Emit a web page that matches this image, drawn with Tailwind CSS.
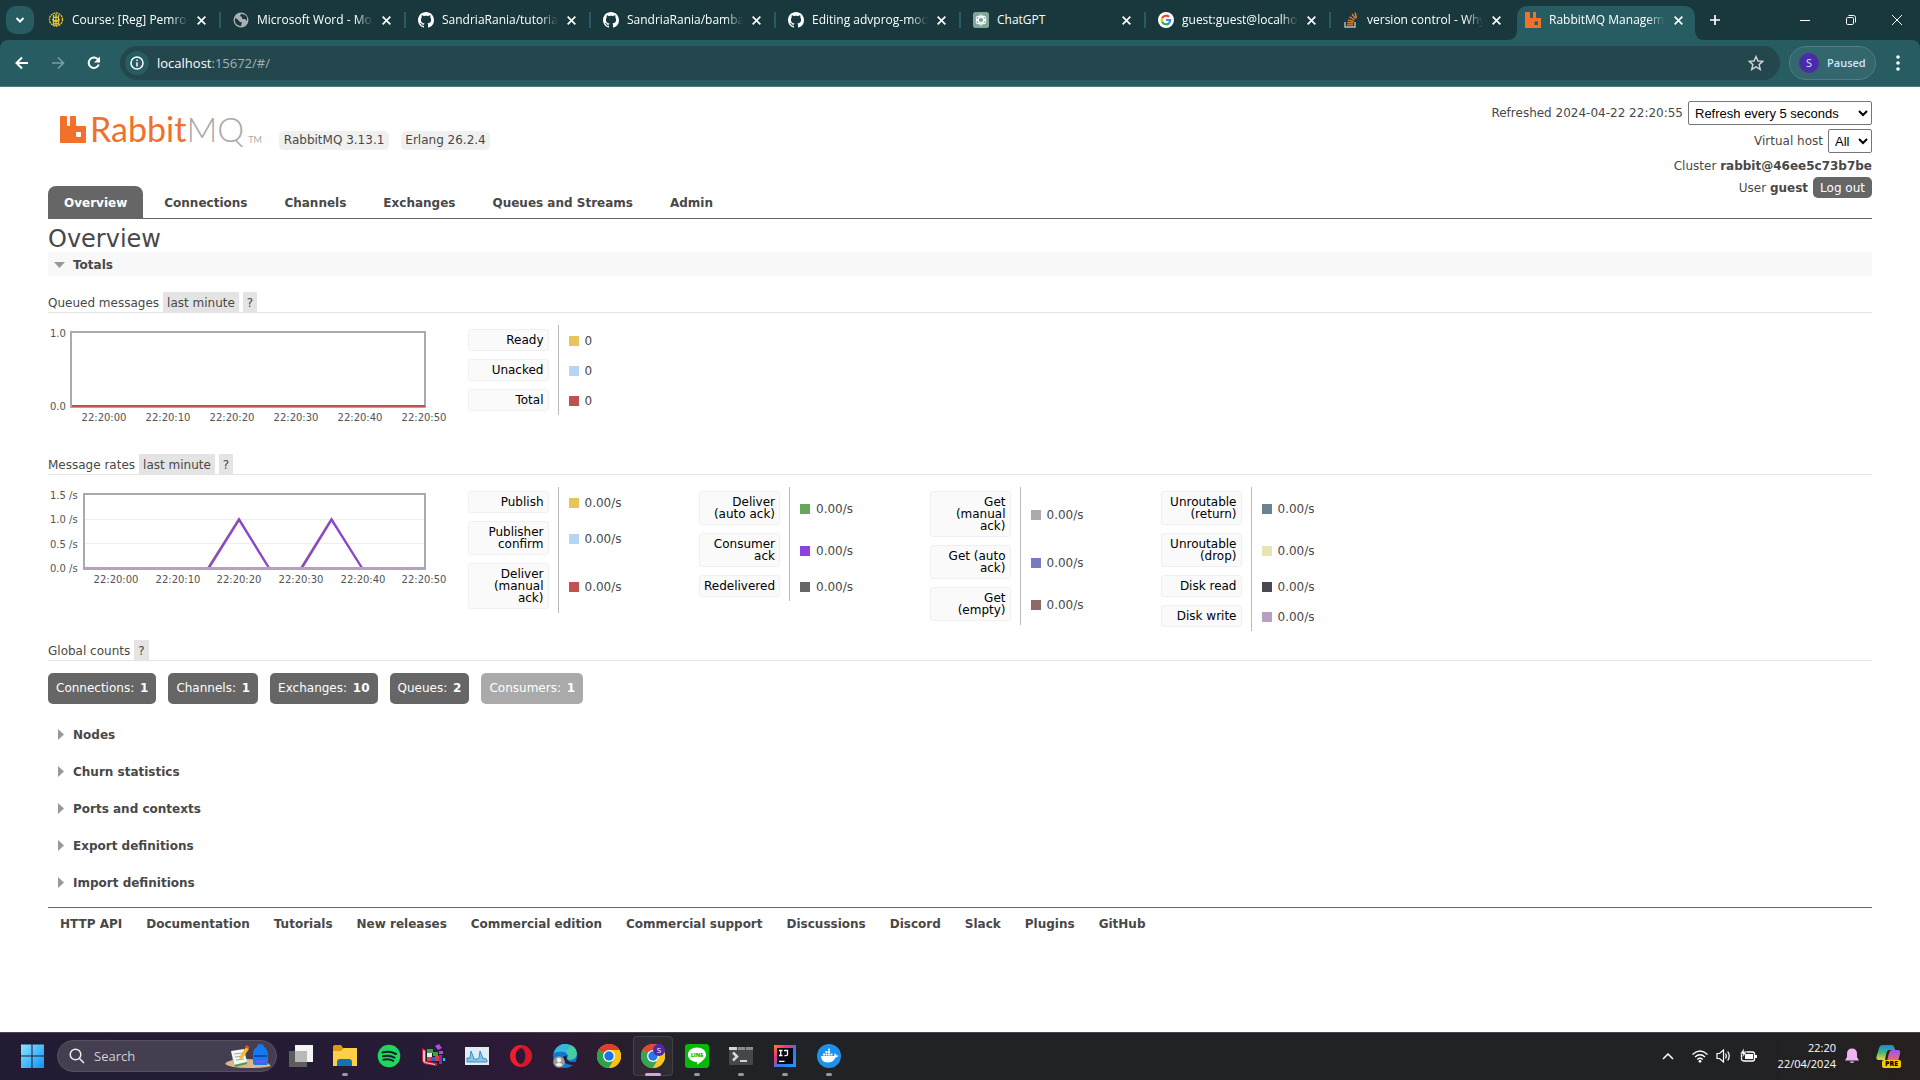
<!DOCTYPE html>
<html lang="en">
<head>
<meta charset="utf-8">
<title>RabbitMQ Management</title>
<script src="https://cdn.jsdelivr.net/npm/@tailwindcss/browser@4"></script>
</head>
<body class="min-h-screen flex flex-col bg-white text-[#484848] text-[12px] leading-4 font-['DejaVu_Sans',Verdana,sans-serif]">

<svg class="hidden">
  <defs>
    <symbol id="x" viewBox="0 0 10 10"><path d="M1.500 1.500l7 7M8.500 1.500l-7 7" stroke="#fff" stroke-width="1.500" fill="none"/></symbol>
    <symbol id="github" viewBox="0 0 16 16"><path fill="#fff" d="M8 0C3.580 0 0 3.580 0 8c0 3.540 2.290 6.530 5.470 7.590.4.070.55-.17.55-.38 0-.19-.01-.82-.01-1.490-2.010.37-2.530-.49-2.690-.94-.09-.23-.48-.94-.82-1.130-.28-.15-.68-.52-.01-.53.63-.01 1.080.58 1.230.82.72 1.210 1.870.87 2.330.66.07-.52.28-.87.51-1.070-1.780-.2-3.640-.89-3.640-3.950 0-.87.31-1.590.82-2.150-.08-.2-.36-1.020.08-2.120 0 0 .67-.21 2.200.82.64-.18 1.320-.27 2-.27s1.360.09 2 .27c1.530-1.040 2.200-.82 2.200-.82.44 1.100.16 1.920.08 2.120.51.56.82 1.270.82 2.150 0 3.070-1.870 3.750-3.650 3.950.29.25.54.73.54 1.480 0 1.070-.01 1.930-.01 2.200 0 .21.15.46.55.38A8 8 0 0 0 16 8c0-4.420-3.580-8-8-8z"/></symbol>
    <symbol id="rabbit" viewBox="0 0 26 27"><path fill="#f0702c" d="M1 0h5q1 0 1 1v8q0 1 1 1h1q1 0 1-1V1q0-1 1-1h4q1 0 1 1v8q0 1 1 1h8q1 0 1 1v15q0 1-1 1H1q-1 0-1-1V1q0-1 1-1z"/><rect x="16" y="16" width="5" height="5" rx="1" fill="#fff"/></symbol>
    <symbol id="chrome" viewBox="0 0 24 24"><circle cx="12" cy="12" r="12" fill="#fbc116"/><path fill="#e33b2e" d="M12 12 1.600 6A12 12 0 0 1 22.400 6z"/><path fill="#2ba24c" d="M1.600 6A12 12 0 0 0 12 24l5.200-9L12 12z"/><path fill="#fbc116" d="M12 6h10.400A12 12 0 0 1 12 24l5.200-9z"/><circle cx="12" cy="12" r="6" fill="#fff"/><circle cx="12" cy="12" r="4.700" fill="#1a73e8"/></symbol>
  </defs>
</svg>

<!-- Browser window: tab strip -->
<div class="flex h-10 bg-[#18383d] pl-[6px] text-white font-['Open_Sans',sans-serif] font-medium">
  <button aria-label="Search tabs" class="mt-[6px] size-7 shrink-0 rounded-[10px] bg-[#265c62] grid place-items-center"><svg class="size-[10px]" viewBox="0 0 10 10"><path d="M1.500 3l3.500 3.500L8.500 3" fill="none" stroke="#fff" stroke-width="2"/></svg></button>
  <div class="flex min-w-0 pl-[2px]">
    <div class="relative flex items-center gap-2 w-[185px] min-w-0 pl-3 pr-[14px]">
      <svg class="size-4 shrink-0" viewBox="0 0 16 16"><g fill="none" stroke="#ecc92f" stroke-width="1.300"><circle cx="8" cy="7.500" r="6.500" stroke-dasharray="2 .7"/><path d="M8 2v12M5 4.500q3 2 6 0M4 7.500q4 3 8 0M5 11q3 2 6 0M5.500 3v10M10.500 3v10"/></g></svg>
      <span class="flex-1 min-w-0 overflow-hidden whitespace-nowrap [mask-image:linear-gradient(to_right,#000_85%,transparent)]">Course: [Reg] Pemrog</span>
      <button aria-label="Close tab" class="shrink-0"><svg class="size-[11px]"><use href="#x"/></svg></button>
      <i class="absolute right-0 top-3 h-4 w-[2px] bg-[#265c62]"></i>
    </div>
    <div class="relative flex items-center gap-2 w-[185px] min-w-0 pl-3 pr-[14px]">
      <svg class="size-4 shrink-0" viewBox="0 0 16 16"><circle cx="8" cy="8" r="7.500" fill="#a9b0b4"/><path fill="#18383d" d="M2 6q3 1 4 3t3 1l-1 4q-4 0-6-4zM8 2l-1 2 2 1 0 2 3 0 2 2V5q-2-3-6-3z"/></svg>
      <span class="flex-1 min-w-0 overflow-hidden whitespace-nowrap [mask-image:linear-gradient(to_right,#000_85%,transparent)]">Microsoft Word - Mo</span>
      <button aria-label="Close tab" class="shrink-0"><svg class="size-[11px]"><use href="#x"/></svg></button>
      <i class="absolute right-0 top-3 h-4 w-[2px] bg-[#265c62]"></i>
    </div>
    <div class="relative flex items-center gap-2 w-[185px] min-w-0 pl-3 pr-[14px]">
      <svg class="size-4 shrink-0"><use href="#github"/></svg>
      <span class="flex-1 min-w-0 overflow-hidden whitespace-nowrap [mask-image:linear-gradient(to_right,#000_85%,transparent)]">SandriaRania/tutorial</span>
      <button aria-label="Close tab" class="shrink-0"><svg class="size-[11px]"><use href="#x"/></svg></button>
      <i class="absolute right-0 top-3 h-4 w-[2px] bg-[#265c62]"></i>
    </div>
    <div class="relative flex items-center gap-2 w-[185px] min-w-0 pl-3 pr-[14px]">
      <svg class="size-4 shrink-0"><use href="#github"/></svg>
      <span class="flex-1 min-w-0 overflow-hidden whitespace-nowrap [mask-image:linear-gradient(to_right,#000_85%,transparent)]">SandriaRania/bamba</span>
      <button aria-label="Close tab" class="shrink-0"><svg class="size-[11px]"><use href="#x"/></svg></button>
      <i class="absolute right-0 top-3 h-4 w-[2px] bg-[#265c62]"></i>
    </div>
    <div class="relative flex items-center gap-2 w-[185px] min-w-0 pl-3 pr-[14px]">
      <svg class="size-4 shrink-0"><use href="#github"/></svg>
      <span class="flex-1 min-w-0 overflow-hidden whitespace-nowrap [mask-image:linear-gradient(to_right,#000_85%,transparent)]">Editing advprog-mod</span>
      <button aria-label="Close tab" class="shrink-0"><svg class="size-[11px]"><use href="#x"/></svg></button>
      <i class="absolute right-0 top-3 h-4 w-[2px] bg-[#265c62]"></i>
    </div>
    <div class="relative flex items-center gap-2 w-[185px] min-w-0 pl-3 pr-[14px]">
      <svg class="size-4 shrink-0" viewBox="0 0 16 16"><rect width="16" height="16" rx="2.500" fill="#7fa798"/><g fill="none" stroke="#fff" stroke-width=".9"><ellipse cx="8" cy="8" rx="2.600" ry="5.300"/><ellipse cx="8" cy="8" rx="2.600" ry="5.300" transform="rotate(60 8 8)"/><ellipse cx="8" cy="8" rx="2.600" ry="5.300" transform="rotate(120 8 8)"/></g></svg>
      <span class="flex-1 min-w-0 overflow-hidden whitespace-nowrap">ChatGPT</span>
      <button aria-label="Close tab" class="shrink-0"><svg class="size-[11px]"><use href="#x"/></svg></button>
      <i class="absolute right-0 top-3 h-4 w-[2px] bg-[#265c62]"></i>
    </div>
    <div class="relative flex items-center gap-2 w-[185px] min-w-0 pl-3 pr-[14px]">
      <svg class="size-4 shrink-0" viewBox="0 0 16 16"><circle cx="8" cy="8" r="8" fill="#fff"/><g fill="none" stroke-width="2.200"><path stroke="#ea4335" d="M4.200 6A4.300 4.300 0 0 1 11 4.900"/><path stroke="#fbbc05" d="M4.200 10a4.300 4.300 0 0 1 0-4"/><path stroke="#34a853" d="M11 11.100A4.300 4.300 0 0 1 4.200 10"/><path stroke="#4285f4" d="M8 8h4.200q0 2-1.300 3.200"/></g></svg>
      <span class="flex-1 min-w-0 overflow-hidden whitespace-nowrap [mask-image:linear-gradient(to_right,#000_85%,transparent)]">guest:guest@localho</span>
      <button aria-label="Close tab" class="shrink-0"><svg class="size-[11px]"><use href="#x"/></svg></button>
      <i class="absolute right-0 top-3 h-4 w-[2px] bg-[#265c62]"></i>
    </div>
    <div class="relative flex items-center gap-2 w-[185px] min-w-0 pl-3 pr-[14px]">
      <svg class="size-4 shrink-0" viewBox="0 0 16 16"><path d="M2 10v5h10v-5" fill="none" stroke="#bcbbbb" stroke-width="1.400"/><path d="M4 12.800h6M4.200 10.500l6 .7M5 7.800l5.700 1.800M6.500 4.800l5 3.200M9 2l3.600 4.700M12 .5l1.500 5.500" stroke="#f48024" stroke-width="1.300"/></svg>
      <span class="flex-1 min-w-0 overflow-hidden whitespace-nowrap [mask-image:linear-gradient(to_right,#000_85%,transparent)]">version control - Why</span>
      <button aria-label="Close tab" class="shrink-0"><svg class="size-[11px]"><use href="#x"/></svg></button>
    </div>
    <div class="relative mt-[6px] ml-px flex items-center gap-2 w-[178px] shrink-0 pl-2 pr-[11px] pb-[6px] rounded-t-[10px] bg-[#265c62]">
      <svg class="absolute bottom-0 -left-[10px] size-[10px]" viewBox="0 0 10 10"><path d="M10 0v10H0Q10 10 10 0z" fill="#265c62"/></svg>
      <svg class="absolute bottom-0 -right-[10px] size-[10px]" viewBox="0 0 10 10"><path d="M0 0v10h10Q0 10 0 0z" fill="#265c62"/></svg>
      <svg class="size-4 shrink-0" viewBox="0 0 16 16"><path fill="#f0702c" d="M0 0h5v6h3V0h3v6h5v10H0z"/><rect x="9.500" y="9.500" width="3.500" height="3.500" fill="#265c62"/></svg>
      <span class="flex-1 min-w-0 overflow-hidden whitespace-nowrap [mask-image:linear-gradient(to_right,#000_85%,transparent)]">RabbitMQ Managem</span>
      <button aria-label="Close tab" class="shrink-0"><svg class="size-[11px]"><use href="#x"/></svg></button>
    </div>
  </div>
  <button aria-label="New tab" class="ml-[14px] shrink-0"><svg class="size-3" viewBox="0 0 12 12"><path d="M6 1v10M1 6h10" stroke="#fff" stroke-width="1.700"/></svg></button>
  <div class="ml-auto flex shrink-0">
    <button aria-label="Minimize" class="w-[46px] grid place-items-center"><svg class="size-[10px]" viewBox="0 0 10 10"><path d="M0 5.500h10" stroke="#fff"/></svg></button>
    <button aria-label="Restore" class="w-[46px] grid place-items-center"><svg class="size-[10px]" viewBox="0 0 10 10"><g fill="none" stroke="#fff"><rect x=".5" y="2.500" width="7" height="7" rx="1.200"/><path d="M2.500.5h5q2 0 2 2v5"/></g></svg></button>
    <button aria-label="Close window" class="w-[46px] grid place-items-center"><svg class="size-[10px]" viewBox="0 0 10 10"><path d="M0 0l10 10M10 0L0 10" stroke="#fff"/></svg></button>
  </div>
</div>

<!-- Browser toolbar -->
<div class="bg-[#18383d]">
<div class="flex items-center h-[47px] pl-[15px] pr-5 pb-px rounded-t-lg bg-[#265c62] border-b border-[#4b7d82] text-white font-['Open_Sans',sans-serif]">
  <button aria-label="Back" class="mr-[22px]"><svg class="size-[14px]" viewBox="0 0 14 14"><path d="M13 7H2M7 1.500L1.500 7 7 12.500" fill="none" stroke="#fff" stroke-width="2"/></svg></button>
  <button aria-label="Forward" class="mr-[22px]"><svg class="size-[14px]" viewBox="0 0 14 14"><path d="M1 7h11M7 1.500L12.500 7 7 12.500" fill="none" stroke="#7b9da1" stroke-width="1.600"/></svg></button>
  <button aria-label="Reload" class="mr-[19px]"><svg class="size-[14px]" viewBox="0 0 14 14"><path d="M11.800 8.500A5.200 5.200 0 1 1 11.300 4" fill="none" stroke="#fff" stroke-width="2"/><path d="M13 .5v6H7z" fill="#fff"/></svg></button>
  <div class="flex flex-1 items-center h-[34px] rounded-full bg-[#23474d] pl-[5px] pr-4">
    <span class="size-6 rounded-full bg-[#265c62] grid place-items-center"><svg class="size-[14px]" viewBox="0 0 14 14"><circle cx="7" cy="7" r="6" fill="none" stroke="#fff" stroke-width="1.500"/><path d="M7 6.200V10.500M7 3.500v1.500" stroke="#fff" stroke-width="1.500"/></svg></span>
    <span class="ml-2 text-[13px] text-[#a0b3b6]"><span class="text-white">localhost</span>:15672/#/</span>
    <button aria-label="Bookmark this tab" class="ml-auto"><svg class="size-4" viewBox="0 0 16 16"><path d="M8 1.500l2 4.500 4.800.4-3.700 3.200 1.200 4.800L8 11.800l-4.300 2.600 1.200-4.800L1.200 6.400 6 6z" fill="none" stroke="#d3d3d3" stroke-width="1.400"/></svg></button>
  </div>
  <button class="ml-[9px] flex items-center gap-2 h-[34px] w-[87px] rounded-full border border-[#4f7f85] bg-[#33666d] pl-[9px] text-[11px] font-semibold text-[#d6e4ff]"><span class="size-5 shrink-0 rounded-full bg-[#4d2ba8] grid place-items-center font-normal">S</span>Paused</button>
  <button aria-label="Menu" class="ml-5"><svg class="h-4 w-1" viewBox="0 0 4 16"><g fill="#fff"><circle cx="2" cy="2" r="1.800"/><circle cx="2" cy="8" r="1.800"/><circle cx="2" cy="14" r="1.800"/></g></svg></button>
</div>
</div>

<!-- Management page -->
<main class="flex-1 px-12">
  <header class="flex justify-between items-start h-[99px] pt-3">
    <div class="flex items-start pl-3 pt-[17px]">
      <a href="#" aria-label="RabbitMQ" class="flex items-start">
        <svg class="w-[26px] h-[27px]"><use href="#rabbit"/></svg>
        <span class="ml-1 -mt-[7px] text-[34px] leading-10 font-['Lato',sans-serif] text-[#f0702c]">Rabbit<span class="font-light text-[#aaa]">MQ</span></span>
        <span class="ml-1 mt-4 text-[9px] leading-4 font-['Lato',sans-serif] text-[#aaa]">TM</span>
      </a>
      <div class="flex gap-3 ml-[17px] pt-[15px]">
        <span class="rounded-[5px] bg-[#f0f0f0] px-[5px] py-px leading-[17px]">RabbitMQ 3.13.1</span>
        <span class="rounded-[5px] bg-[#f0f0f0] px-1 py-px leading-[17px]">Erlang 26.2.4</span>
      </div>
    </div>
    <div class="flex flex-col items-end pt-[2px]">
      <label class="flex items-center gap-[5px]">Refreshed 2024-04-22 22:20:55
        <select class="h-6 w-[184px] rounded-[2px] border border-[#767676] bg-white pl-[2px] text-[13px] text-black font-['Liberation_Sans',Arial,sans-serif]"><option>Refresh every 5 seconds</option></select></label>
      <label class="flex items-center gap-[5px] mt-1">Virtual host
        <select class="h-6 w-11 rounded-[2px] border border-[#767676] bg-white pl-[2px] text-[13px] text-black font-['Liberation_Sans',Arial,sans-serif]"><option>All</option></select></label>
      <p class="mt-[5px]">Cluster <b>rabbit@46ee5c73b7be</b></p>
      <p class="mt-[3px] flex items-center gap-[5px]"><span>User <b>guest</b></span> <button class="h-[21px] rounded-[5px] bg-[#666] px-[7px] text-white">Log out</button></p>
    </div>
  </header>

  <nav class="flex gap-[5px] border-b border-[#666] font-bold leading-4">
    <a href="#" class="rounded-t-lg bg-[#666] px-4 pt-[9px] pb-[7px] text-white">Overview</a>
    <a href="#" class="px-4 pt-[9px] pb-[7px]">Connections</a>
    <a href="#" class="px-4 pt-[9px] pb-[7px]">Channels</a>
    <a href="#" class="px-4 pt-[9px] pb-[7px]">Exchanges</a>
    <a href="#" class="px-4 pt-[9px] pb-[7px]">Queues and Streams</a>
    <a href="#" class="px-4 pt-[9px] pb-[7px]">Admin</a>
  </nav>

  <h1 class="pt-2 text-[24px] leading-[25px]">Overview</h1>
  <h2 class="bg-[#f8f8f8]"><button class="flex items-center gap-2 h-6 pl-[6px] pt-px font-bold"><svg class="w-[11px] h-[6px]" viewBox="0 0 11 6"><path d="M0 0h11L5.500 6z" fill="#999"/></svg>Totals</button></h2>

  <h3 class="mt-4 flex gap-1 h-[21px] border-b border-[#e4e4e4] leading-[22px]"><span>Queued messages</span><button class="h-5 bg-[#e4e4e4] px-1">last minute</button><button class="h-5 bg-[#e4e4e4] px-1">?</button></h3>
  <section class="flex items-start h-[141px] pt-3">
    <svg class="w-[420px] h-[100px] shrink-0" viewBox="0 0 420 100" fill="#545454" font-size="10" font-family="DejaVu Sans, Verdana, sans-serif">
      <rect x="23" y="7" width="354" height="75" fill="none" stroke="#aaa" stroke-width="2"/>
      <path d="M24 81h353" stroke="#c0514f" stroke-width="2"/>
      <text x="2" y="12">1.0</text><text x="2" y="85">0.0</text>
      <g text-anchor="middle"><text x="56" y="96">22:20:00</text><text x="120" y="96">22:20:10</text><text x="184" y="96">22:20:20</text><text x="248" y="96">22:20:30</text><text x="312" y="96">22:20:40</text><text x="376" y="96">22:20:50</text></g>
    </svg>
    <table class="w-[231px]">
      <tr><th class="w-[90px] py-1 pr-[9px] border-r border-[#bbb] font-normal"><button class="block w-full rounded-[3px] border border-[#f0f0f0] bg-[#fafafa] p-1 text-right leading-3 text-black">Ready</button></th><td class="pl-[10px] pt-[2px]"><span class="flex items-center gap-[6px]"><i class="size-[10px] bg-[#e8c45c]"></i>0</span></td></tr>
      <tr><th class="w-[90px] py-1 pr-[9px] border-r border-[#bbb] font-normal"><button class="block w-full rounded-[3px] border border-[#f0f0f0] bg-[#fafafa] p-1 text-right leading-3 text-black">Unacked</button></th><td class="pl-[10px] pt-[2px]"><span class="flex items-center gap-[6px]"><i class="size-[10px] bg-[#b4d6f4]"></i>0</span></td></tr>
      <tr><th class="w-[90px] py-1 pr-[9px] border-r border-[#bbb] font-normal"><button class="block w-full rounded-[3px] border border-[#f0f0f0] bg-[#fafafa] p-1 text-right leading-3 text-black">Total</button></th><td class="pl-[10px] pt-[2px]"><span class="flex items-center gap-[6px]"><i class="size-[10px] bg-[#c0514f]"></i>0</span></td></tr>
    </table>
  </section>

  <h3 class="flex gap-1 h-[21px] border-b border-[#e4e4e4] leading-[22px]"><span>Message rates</span><button class="h-5 bg-[#e4e4e4] px-1">last minute</button><button class="h-5 bg-[#e4e4e4] px-1">?</button></h3>
  <section class="flex items-start h-[165px] pt-3">
    <svg class="w-[420px] h-[100px] shrink-0" viewBox="0 0 420 100" fill="#545454" font-size="10" font-family="DejaVu Sans, Verdana, sans-serif">
      <path d="M36 32.500h341M36 56.500h341" stroke="#eee"/>
      <rect x="36" y="7" width="341" height="75" fill="none" stroke="#aaa" stroke-width="2"/>
      <path d="M160 81L191 32L221 81M253 81L283.500 32L314 81" fill="none" stroke="#8d6868" stroke-width="2"/>
      <path d="M161 81L191 33L221 81M254 81L283.500 33L314 81" fill="none" stroke="#8c43df" stroke-width="2"/>
      <path d="M36 81h341" stroke="#b8a0c0" stroke-width="2"/>
      <text x="2" y="12">1.5 /s</text><text x="2" y="36">1.0 /s</text><text x="2" y="61">0.5 /s</text><text x="2" y="85">0.0 /s</text>
      <g text-anchor="middle"><text x="68" y="96">22:20:00</text><text x="130" y="96">22:20:10</text><text x="191" y="96">22:20:20</text><text x="253" y="96">22:20:30</text><text x="315" y="96">22:20:40</text><text x="376" y="96">22:20:50</text></g>
    </svg>
    <table class="w-[231px]">
      <tr><th class="w-[90px] py-1 pr-[9px] border-r border-[#bbb] font-normal"><button class="block w-full rounded-[3px] border border-[#f0f0f0] bg-[#fafafa] p-1 text-right leading-3 text-black">Publish</button></th><td class="pl-[10px] pt-[2px]"><span class="flex items-center gap-[6px]"><i class="size-[10px] bg-[#e8c45c]"></i>0.00/s</span></td></tr>
      <tr><th class="w-[90px] py-1 pr-[9px] border-r border-[#bbb] font-normal"><button class="block w-full rounded-[3px] border border-[#f0f0f0] bg-[#fafafa] p-1 text-right leading-3 text-black">Publisher<br>confirm</button></th><td class="pl-[10px] pt-[2px]"><span class="flex items-center gap-[6px]"><i class="size-[10px] bg-[#b4d6f4]"></i>0.00/s</span></td></tr>
      <tr><th class="w-[90px] py-1 pr-[9px] border-r border-[#bbb] font-normal"><button class="block w-full rounded-[3px] border border-[#f0f0f0] bg-[#fafafa] p-1 text-right leading-3 text-black">Deliver<br>(manual<br>ack)</button></th><td class="pl-[10px] pt-[2px]"><span class="flex items-center gap-[6px]"><i class="size-[10px] bg-[#c0514f]"></i>0.00/s</span></td></tr>
    </table>
    <table class="w-[231px]">
      <tr><th class="w-[90px] py-1 pr-[9px] border-r border-[#bbb] font-normal"><button class="block w-full rounded-[3px] border border-[#f0f0f0] bg-[#fafafa] p-1 text-right leading-3 text-black">Deliver<br>(auto ack)</button></th><td class="pl-[10px] pt-[2px]"><span class="flex items-center gap-[6px]"><i class="size-[10px] bg-[#65a857]"></i>0.00/s</span></td></tr>
      <tr><th class="w-[90px] py-1 pr-[9px] border-r border-[#bbb] font-normal"><button class="block w-full rounded-[3px] border border-[#f0f0f0] bg-[#fafafa] p-1 text-right leading-3 text-black">Consumer<br>ack</button></th><td class="pl-[10px] pt-[2px]"><span class="flex items-center gap-[6px]"><i class="size-[10px] bg-[#8c43df]"></i>0.00/s</span></td></tr>
      <tr><th class="w-[90px] py-1 pr-[9px] border-r border-[#bbb] font-normal"><button class="block w-full rounded-[3px] border border-[#f0f0f0] bg-[#fafafa] p-1 text-right leading-3 text-black">Redelivered</button></th><td class="pl-[10px] pt-[2px]"><span class="flex items-center gap-[6px]"><i class="size-[10px] bg-[#666]"></i>0.00/s</span></td></tr>
    </table>
    <table class="w-[231px]">
      <tr><th class="w-[90px] py-1 pr-[9px] border-r border-[#bbb] font-normal"><button class="block w-full rounded-[3px] border border-[#f0f0f0] bg-[#fafafa] p-1 text-right leading-3 text-black">Get<br>(manual<br>ack)</button></th><td class="pl-[10px] pt-[2px]"><span class="flex items-center gap-[6px]"><i class="size-[10px] bg-[#aaa]"></i>0.00/s</span></td></tr>
      <tr><th class="w-[90px] py-1 pr-[9px] border-r border-[#bbb] font-normal"><button class="block w-full rounded-[3px] border border-[#f0f0f0] bg-[#fafafa] p-1 text-right leading-3 text-black">Get (auto<br>ack)</button></th><td class="pl-[10px] pt-[2px]"><span class="flex items-center gap-[6px]"><i class="size-[10px] bg-[#7c79c3]"></i>0.00/s</span></td></tr>
      <tr><th class="w-[90px] py-1 pr-[9px] border-r border-[#bbb] font-normal"><button class="block w-full rounded-[3px] border border-[#f0f0f0] bg-[#fafafa] p-1 text-right leading-3 text-black">Get<br>(empty)</button></th><td class="pl-[10px] pt-[2px]"><span class="flex items-center gap-[6px]"><i class="size-[10px] bg-[#8d6868]"></i>0.00/s</span></td></tr>
    </table>
    <table class="w-[231px]">
      <tr><th class="w-[90px] py-1 pr-[9px] border-r border-[#bbb] font-normal"><button class="block w-full rounded-[3px] border border-[#f0f0f0] bg-[#fafafa] p-1 text-right leading-3 text-black">Unroutable<br>(return)</button></th><td class="pl-[10px] pt-[2px]"><span class="flex items-center gap-[6px]"><i class="size-[10px] bg-[#6d8290]"></i>0.00/s</span></td></tr>
      <tr><th class="w-[90px] py-1 pr-[9px] border-r border-[#bbb] font-normal"><button class="block w-full rounded-[3px] border border-[#f0f0f0] bg-[#fafafa] p-1 text-right leading-3 text-black">Unroutable<br>(drop)</button></th><td class="pl-[10px] pt-[2px]"><span class="flex items-center gap-[6px]"><i class="size-[10px] bg-[#e7e5b4]"></i>0.00/s</span></td></tr>
      <tr><th class="w-[90px] py-1 pr-[9px] border-r border-[#bbb] font-normal"><button class="block w-full rounded-[3px] border border-[#f0f0f0] bg-[#fafafa] p-1 text-right leading-3 text-black">Disk read</button></th><td class="pl-[10px] pt-[2px]"><span class="flex items-center gap-[6px]"><i class="size-[10px] bg-[#4a4853]"></i>0.00/s</span></td></tr>
      <tr><th class="w-[90px] py-1 pr-[9px] border-r border-[#bbb] font-normal"><button class="block w-full rounded-[3px] border border-[#f0f0f0] bg-[#fafafa] p-1 text-right leading-3 text-black">Disk write</button></th><td class="pl-[10px] pt-[2px]"><span class="flex items-center gap-[6px]"><i class="size-[10px] bg-[#b8a0c0]"></i>0.00/s</span></td></tr>
    </table>
  </section>

  <h3 class="flex gap-1 h-[21px] border-b border-[#e4e4e4] leading-[22px]"><span>Global counts</span><button class="h-5 bg-[#e4e4e4] px-1">?</button></h3>
  <div class="flex gap-3 pt-3 pb-3 text-white">
    <a href="#" class="rounded-[5px] bg-[#666] px-2 py-2 leading-[15px]">Connections: <b class="ml-[2px]">1</b></a>
    <a href="#" class="rounded-[5px] bg-[#666] px-2 py-2 leading-[15px]">Channels: <b class="ml-[2px]">1</b></a>
    <a href="#" class="rounded-[5px] bg-[#666] px-2 py-2 leading-[15px]">Exchanges: <b class="ml-[2px]">10</b></a>
    <a href="#" class="rounded-[5px] bg-[#666] px-2 py-2 leading-[15px]">Queues: <b class="ml-[2px]">2</b></a>
    <span class="rounded-[5px] bg-[#aaa] px-2 py-2 leading-[15px]">Consumers: <b class="ml-[2px]">1</b></span>
  </div>
  <div class="flex flex-col items-start pb-[6px] font-bold">
    <button class="flex items-center gap-[9px] h-[37px] pl-[10px]"><svg class="w-[6px] h-[11px]" viewBox="0 0 6 11"><path d="M0 0v11l6-5.500z" fill="#999"/></svg>Nodes</button>
    <button class="flex items-center gap-[9px] h-[37px] pl-[10px]"><svg class="w-[6px] h-[11px]" viewBox="0 0 6 11"><path d="M0 0v11l6-5.500z" fill="#999"/></svg>Churn statistics</button>
    <button class="flex items-center gap-[9px] h-[37px] pl-[10px]"><svg class="w-[6px] h-[11px]" viewBox="0 0 6 11"><path d="M0 0v11l6-5.500z" fill="#999"/></svg>Ports and contexts</button>
    <button class="flex items-center gap-[9px] h-[37px] pl-[10px]"><svg class="w-[6px] h-[11px]" viewBox="0 0 6 11"><path d="M0 0v11l6-5.500z" fill="#999"/></svg>Export definitions</button>
    <button class="flex items-center gap-[9px] h-[37px] pl-[10px]"><svg class="w-[6px] h-[11px]" viewBox="0 0 6 11"><path d="M0 0v11l6-5.500z" fill="#999"/></svg>Import definitions</button>
  </div>
  <footer class="flex gap-6 border-t border-[#666] pl-3 pt-2 font-bold">
    <a href="#">HTTP API</a><a href="#">Documentation</a><a href="#">Tutorials</a><a href="#">New releases</a><a href="#">Commercial edition</a><a href="#">Commercial support</a><a href="#">Discussions</a><a href="#">Discord</a><a href="#">Slack</a><a href="#">Plugins</a><a href="#">GitHub</a>
  </footer>
</main>

<!-- Desktop taskbar -->
<div class="flex items-center h-12 pb-px border-t border-[#47434f] bg-[linear-gradient(to_right,#231b33,#261b36_22%,#2e1a35_29%,#202225_36%,#202225_90%,#26201f)] text-white font-['Open_Sans',sans-serif]">
  <button aria-label="Start" class="ml-5"><svg class="size-6" viewBox="0 0 24 24"><defs><linearGradient id="win" x2="1" y2="1"><stop stop-color="#8be6ff"/><stop offset="1" stop-color="#0a93f5"/></linearGradient></defs><path fill="url(#win)" d="M1 .5h10.500V11.500H1zM12.500.5H24V11.500H12.500zM1 12.500h10.500V24H1zM12.500 12.500H24V24H12.500z"/></svg></button>
  <label class="ml-[13px] flex items-center h-8 w-[220px] rounded-full border border-[#585160] bg-[#453e51] pl-[11px] pr-[5px]">
    <svg class="size-4 shrink-0" viewBox="0 0 16 16"><g fill="none" stroke="#eee" stroke-width="1.500"><circle cx="6.500" cy="6.500" r="5.300"/><path d="M10.500 10.500l4.500 4.500"/></g></svg>
    <input aria-label="Search" placeholder="Search" class="ml-[9px] w-[110px] min-w-0 flex-1 bg-transparent text-[13px] placeholder:text-[#d2d0d6]">
    <svg class="w-[46px] h-6 shrink-0" viewBox="0 0 46 24"><path d="M0 20q3-5 22-5t24 7q-5 2-23 2T0 20z" fill="#dcb78b"/><path d="M6 7l13-2 3 13-13 3z" fill="#f4f5ee"/><path d="M9 21l13-3v2l-12 3-4-15z" fill="#4b9c57"/><path d="M9 10l9-1M10 13l8-1M11 16l8-1" stroke="#a5b0a8"/><path d="M14 14l7-11 3 2-7 10z" fill="#f8b62d"/><path d="M20 3l1.500-2 3 2-1 2z" fill="#e24a4a"/><path d="M32 3q0-3 3.500-3T39 3q4 2 4 8v8q0 2-3 2h-9q-3 0-3-2v-8q0-6 4-8z" fill="#1679ee"/><path d="M29 11h13v2H29z" fill="#0a4bc1"/><path d="M31 17.500h9" stroke="#8e4cf0" stroke-width="2"/></svg>
  </label>
  <div class="flex ml-[2px]">
    <button aria-label="Task view" class="grid size-11 place-items-center"><svg class="size-6" viewBox="0 0 24 24"><path fill="#f4f4f4" d="M6 1h18v17H6z"/><path fill="#5d5d5d" d="M0 7h18v16H0z"/><path fill="#b9b9b9" d="M6 7h12v11H6z"/></svg></button>
    <button aria-label="Files" class="relative grid size-11 place-items-center"><svg class="size-6" viewBox="0 0 24 24"><path fill="#e09a12" d="M0 3q0-2 2-2h6l2 3H24v6H0z"/><path fill="#fccf47" d="M0 7h8l3-3h13v18H0z"/><path fill="#1672b8" d="M4 22v-4q0-3 3-3h9q3 0 3 3v4z"/></svg><i class="absolute bottom-[2px] h-[3px] w-[6px] rounded-full bg-[#999]"></i></button>
    <button aria-label="Spotify" class="grid size-11 place-items-center"><svg class="size-6" viewBox="0 0 24 24"><circle cx="12" cy="12" r="11.300" fill="#1ed760"/><path d="M5.500 8.500q7-2 13.500 1.500M6 12.300q6-1.700 11.500 1.300M6.500 15.800q5-1.300 9.800 1" fill="none" stroke="#17202a" stroke-width="2" stroke-linecap="round"/></svg></button>
    <button aria-label="Games" class="grid size-11 place-items-center"><svg class="size-6" viewBox="0 0 24 24"><path fill="#c9263b" d="M1 4l4 2v11l11 2v3L3 20l-2-3z"/><path fill="#eec9cf" d="M2 6l2 1v11l10 2v1L4 19l-2-2z"/><path fill="#37a83f" d="M6 5h6v4H6zM12 8h5v4h-5z"/><path fill="#b04ae0" d="M14 2l4-2 3 4-4 2zM18 7h4v3h-4z"/><path fill="#e9e9f4" d="M6 9h5v4H6z"/><path fill="#2a63cf" d="M10 13h5v4h-5z"/><path fill="#dc3c4a" d="M6 13h4v4H6zM14 12h4v5h-4z"/><path fill="#7e2fb9" d="M18 11h3v9h-3z"/><path fill="#2cc6e6" d="M22 14h2v3h-2z"/></svg></button>
    <button aria-label="Monitor" class="grid size-11 place-items-center"><svg class="size-6" viewBox="0 0 24 24"><rect y="3" width="24" height="18" fill="#e8ebee"/><rect x="1.500" y="5" width="21" height="14" fill="#dceefa"/><path d="M2 18v-4l3 0 1-7 2 5 1 3 3 0 2-1 1-7 2 5 1 3 2-1 2 2v2z" fill="#86c6ec" stroke="#287cb5" stroke-width=".8"/></svg></button>
    <button aria-label="Opera" class="grid size-11 place-items-center"><svg class="size-6" viewBox="0 0 24 24"><path fill-rule="evenodd" fill="#f01d2e" d="M12 1a11 11 0 1 1 0 22 11 11 0 0 1 0-22zm0 3c-7 1-7 15 0 16 6-1 6-15 0-16z"/><path fill="#b90f23" d="M14 1.200A11 11 0 0 1 14 22.800Q10 23 10 19.500q7 1 7-7.500T10 4.500Q11 1 14 1.200z" opacity=".45"/></svg></button>
    <button aria-label="Edge" class="grid size-11 place-items-center"><svg class="size-6" viewBox="0 0 24 24"><circle cx="12" cy="12" r="12" fill="#1078cf"/><path fill="#43cfa2" d="M1 9Q4 0 13 0q11 1 11 10-1 6-8 6-3-1-1-4Q13 5 1 9z"/><path fill="#34b5e5" d="M1 9Q4 0 13 0l5 2q-5 3-5 6-5-4-12 1z"/><path fill="#2b1a37" d="M14 11q-3 8 9 7-1 2-3 3-10 0-10-8z"/><circle cx="6" cy="18" r="5.800" fill="#9d9d9d"/><circle cx="6" cy="16" r="2.200" fill="#eee"/><path d="M2.500 21q3.500-5 7 0-3.500 2.500-7 0z" fill="#eee"/></svg></button>
    <button aria-label="Chrome" class="grid size-11 place-items-center"><svg class="size-6"><use href="#chrome"/></svg></button>
    <button aria-label="Chrome, S profile" class="relative grid size-11 place-items-center"><i class="absolute inset-x-[2px] inset-y-[2px] rounded border border-white/10 bg-white/5"></i><svg class="size-6"><use href="#chrome"/></svg><span class="absolute left-[22px] top-[10px] grid size-3 place-items-center rounded-full bg-[#4d2ba8] text-[8px] leading-3">S</span><i class="absolute bottom-[2px] h-[3px] w-4 rounded-full bg-[#dc9fe6]"></i></button>
    <button aria-label="LINE" class="relative grid size-11 place-items-center"><svg class="size-6" viewBox="0 0 24 24"><rect width="24" height="24" rx="3" fill="#06b906"/><path fill="#fff" d="M12 3.500c5 0 9 3 9 7.200 0 4-5 7.500-9 10 .5-2 0-2.600-.5-2.700C6.500 17.500 3 14.700 3 10.700c0-4.200 4-7.200 9-7.200z"/><text x="12" y="13" text-anchor="middle" font-size="5.500" font-weight="800" fill="#06b906">LINE</text></svg><i class="absolute bottom-[2px] h-[3px] w-[6px] rounded-full bg-[#999]"></i></button>
    <button aria-label="Terminal" class="relative grid size-11 place-items-center"><svg class="size-6" viewBox="0 0 24 24"><rect y="3" width="24" height="18" rx="1" fill="#46474a"/><path fill="#d6d6d6" d="M0 3h8v3H0z"/><path fill="#8b8b8b" d="M9 3h7v3H9zM17 3h7v3h-7z"/><path d="M4 8.500l4 4-4 4" stroke="#d9d9d9" stroke-width="2.500" fill="none"/><path d="M11 17h7" stroke="#fff" stroke-width="1.500"/></svg><i class="absolute bottom-[2px] h-[3px] w-[6px] rounded-full bg-[#999]"></i></button>
    <button aria-label="IntelliJ IDEA" class="relative grid size-11 place-items-center"><svg class="size-6" viewBox="0 0 24 24"><defs><linearGradient id="ij" x2="1" y2="1"><stop stop-color="#fd8224"/><stop offset=".3" stop-color="#f0327c"/><stop offset=".6" stop-color="#2a7cf0"/><stop offset="1" stop-color="#2096ff"/></linearGradient></defs><rect x="1" y="1" width="22" height="22" fill="url(#ij)"/><rect x="4" y="4" width="16" height="16" fill="#0b0710"/><path d="M6 6.500h3.500M7.700 6.500v5M6 11.500h3.500M11 6.500h3.500v4q0 1.500-3 1M6 17.300h5.500" stroke="#fff" stroke-width="1.300" fill="none"/></svg><i class="absolute bottom-[2px] h-[3px] w-[6px] rounded-full bg-[#999]"></i></button>
    <button aria-label="Docker" class="relative grid size-11 place-items-center"><svg class="size-6" viewBox="0 0 24 24"><circle cx="12" cy="12" r="12" fill="#1d91eb"/><path fill="#fff" d="M4 12h13q1-1 .5-3 2 1 2 2.500l2 0q-1 2-3 2-2 5-8 5-6 0-6.500-6.500zM6 9.500h2v2H6zM8.500 9.500h2v2h-2zM11 9.500h2v2h-2zM13.500 9.500h2v2h-2zM8.500 7h2v2h-2zM11 7h2v2h-2zM11 4.800h2v1.700h-2z"/></svg><i class="absolute bottom-[2px] h-[3px] w-[6px] rounded-full bg-[#999]"></i></button>
  </div>
  <div class="ml-auto flex items-center pr-[18px]">
    <button aria-label="Hidden icons" class="mr-[18px]"><svg class="w-3 h-[7px]" viewBox="0 0 12 7"><path d="M1 6l5-5 5 5" fill="none" stroke="#fff" stroke-width="1.500"/></svg></button>
    <button aria-label="Network and sound" class="flex items-center gap-2">
      <svg class="size-4" viewBox="0 0 16 16"><g fill="none" stroke="#fff" stroke-width="1.300"><path d="M.5 6.500q7.500-7 15 0M3 9q5-4.500 10 0M5.300 11.400q2.700-2.300 5.400 0"/></g><circle cx="8" cy="13.300" r="1.400" fill="#fff"/></svg>
      <svg class="size-4" viewBox="0 0 16 16"><g fill="none" stroke="#fff" stroke-width="1.200"><path d="M1 5.500h2.500L7.500 2v12l-4-3.500H1z"/><path d="M9.500 5.500q1.700 2.500 0 5M11.700 3.500q3 4.500 0 9"/></g></svg>
      <svg class="w-[18px] h-4" viewBox="0 0 18 16"><rect x="1.500" y="4" width="13" height="9" rx="2" fill="none" stroke="#fff" stroke-width="1.300"/><rect x="5" y="6" width="8" height="5" fill="#fff"/><path d="M16 7v3" stroke="#fff" stroke-width="2"/><path d="M4 0L0 6h3L2 10l5-6H4z" fill="#fff" stroke="#202225" stroke-width=".5"/></svg>
    </button>
    <div class="ml-3 w-[66px] text-right text-[11px] leading-4">22:20<br>22/04/2024</div>
    <button aria-label="Notifications" class="ml-2"><svg class="size-4" viewBox="0 0 16 16"><path fill="#efb5f0" d="M8 .5q5 0 5 5.500v3l2 3.500H1L3 9V6Q3 .5 8 .5zM5.500 13.500h5q-2.500 3-5 0z"/></svg></button>
    <button aria-label="Copilot" class="relative ml-4"><svg class="w-[26px] h-6" viewBox="0 0 26 24"><defs><linearGradient id="ca" y2="1" x2="0"><stop stop-color="#1686e6"/><stop offset=".5" stop-color="#45b875"/><stop offset="1" stop-color="#f0d33f"/></linearGradient><linearGradient id="cb" y2="1" x2="0"><stop stop-color="#9b54f1"/><stop offset="1" stop-color="#f06a6e"/></linearGradient></defs><path fill="url(#ca)" d="M6 1h10q2 0 3 5h-6q-2 0-3 5l-1 5H3q-4 0-2-5l2-7q1-3 3-3z"/><path fill="url(#cb)" d="M16 6h6q3 0 2 4l-2 7H11l2-8q1-3 3-3z"/></svg><span class="absolute left-[6px] top-4 rounded-[2px] bg-[#fdc800] px-[3px] text-[7px] leading-2 font-extrabold text-black">PRE</span></button>
  </div>
</div>
</body>
</html>
